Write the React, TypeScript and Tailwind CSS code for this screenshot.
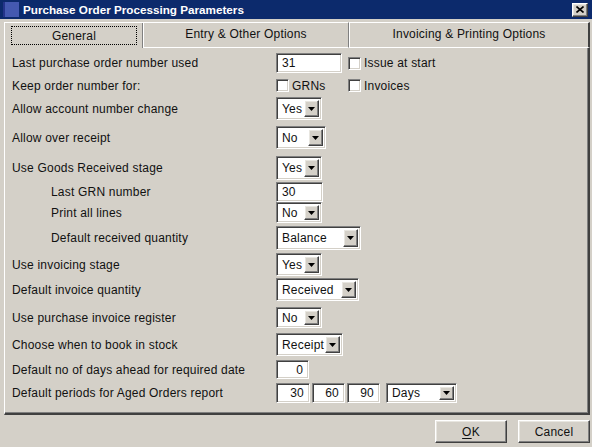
import type { ReactNode } from "react";

const raised =
  "border border-t-white border-l-white border-b-[#404040] border-r-[#404040] shadow-[inset_-1px_-1px_0_#808080,inset_1px_1px_0_#e8e6e0]";
const sunken =
  "border border-t-[#808080] border-l-[#808080] border-b-white border-r-white shadow-[inset_1px_1px_0_#404040,inset_-1px_-1px_0_#d4d0c8]";

const Field = ({ value, className, right }: { value: string; className: string; right?: boolean }) => (
  <div
    className={`${sunken} ${className} flex items-center bg-white ${right ? "justify-end pr-[5px]" : "pl-[5px]"}`}
  >
    {value}
  </div>
);

const Combo = ({ value, className }: { value: string; className: string }) => (
  <div className={`${sunken} ${className} flex items-stretch bg-white p-[2px]`}>
    <span className="flex flex-1 items-center pl-[3px]">{value}</span>
    <span className={`${raised} flex w-[15px] items-center justify-center bg-[#d4d0c8]`}>
      <svg width="7" height="4" viewBox="0 0 7 4">
        <path d="M0 0h7L3.5 4z" fill="#000" />
      </svg>
    </span>
  </div>
);

const Check = ({ label }: { label: string }) => (
  <div className="flex items-center gap-[3px]">
    <span className={`${sunken} h-[13px] w-[13px] bg-white`} />
    <span>{label}</span>
  </div>
);

const Row = ({
  label,
  indent,
  className,
  children,
}: {
  label: string;
  indent?: boolean;
  className: string;
  children: ReactNode;
}) => (
  <div className={`flex items-center ${className}`}>
    <div className={`w-[271px] shrink-0 ${indent ? "pl-[46px]" : "pl-[7px]"}`}>{label}</div>
    <div className="flex h-full items-center">{children}</div>
  </div>
);

export default function App() {
  return (
    <div
      className="flex h-[447px] w-[592px] flex-col overflow-hidden bg-[#d4d0c8] text-[12px] leading-none tracking-[0.2px] text-[#111]"
      style={{ fontFamily: '"Liberation Sans", Arial, sans-serif' }}
    >
      {/* title bar */}
      <div className="flex h-[19px] shrink-0 items-center bg-[#0c2a6c] pl-[3px] pr-[4px]">
        <div className="h-[15px] w-[16px] border-l-2 border-[#24348a] bg-[#4459b0]" />
        <div className="ml-[4px] flex-1 text-[11.7px] font-bold tracking-normal text-white">
          Purchase Order Processing Parameters
        </div>
        <div className={`${raised} flex h-[14px] w-[16px] items-center justify-center bg-[#d4d0c8]`}>
          <svg width="8" height="7" viewBox="0 0 8 7">
            <path d="M0.5 0.5l7 6M7.5 0.5l-7 6" stroke="#000" strokeWidth="1.6" />
          </svg>
        </div>
      </div>

      <div className="flex flex-1 flex-col pl-[4px] pr-[2px]">
        {/* tabs */}
        <div className="mt-[3px] flex h-[26px] shrink-0">
          <div className="flex w-[139px] items-center justify-center border-l border-t border-white px-[6px] pb-[2px] pt-[2px] shadow-[inset_-1px_0_0_#808080]">
            <div className="flex h-[19px] w-full items-center justify-center border border-dotted border-black">
              General
            </div>
          </div>
          <div className="flex w-[206px] items-center justify-center border-b border-l border-t border-white border-r-[#808080] border-r pb-[2px]">
            Entry &amp; Other Options
          </div>
          <div className="flex w-[241px] items-center justify-center border-b border-l border-t border-white border-r-[#404040] border-r-2 pb-[2px]">
            Invoicing &amp; Printing Options
          </div>
        </div>

        {/* panel */}
        <div className="flex h-[367px] shrink-0 flex-col border-b-2 border-l border-r-2 border-white border-b-[#404040] border-r-[#404040] shadow-[inset_-1px_-1px_0_#808080]">
          <Row label="Last purchase order number used" className="mt-[5px] h-[20px]">
            <Field value="31" className="h-[20px] w-[66px]" />
            <div className="ml-[6px]">
              <Check label="Issue at start" />
            </div>
          </Row>
          <Row label="Keep order number for:" className="mt-[6px] h-[13px]">
            <div className="w-[72px]">
              <Check label="GRNs" />
            </div>
            <Check label="Invoices" />
          </Row>
          <Row label="Allow account number change" className="mt-[5px] h-[23px]">
            <Combo value="Yes" className="h-[23px] w-[46px]" />
          </Row>
          <Row label="Allow over receipt" className="mt-[6px] h-[23px]">
            <Combo value="No" className="h-[23px] w-[50px]" />
          </Row>
          <Row label="Use Goods Received stage" className="mt-[7px] h-[24px]">
            <Combo value="Yes" className="h-[24px] w-[46px]" />
          </Row>
          <Row label="Last GRN number" indent className="mt-[2px] h-[20px]">
            <Field value="30" className="h-[20px] w-[47px]" />
          </Row>
          <Row label="Print all lines" indent className="h-[21px]">
            <Combo value="No" className="h-[21px] w-[46px]" />
          </Row>
          <Row label="Default received quantity" indent className="mt-[3px] h-[24px]">
            <Combo value="Balance" className="h-[24px] w-[85px]" />
          </Row>
          <Row label="Use invoicing stage" className="mt-[3px] h-[23px]">
            <Combo value="Yes" className="h-[23px] w-[46px]" />
          </Row>
          <Row label="Default invoice quantity" className="mt-[2px] h-[23px]">
            <Combo value="Received" className="h-[23px] w-[83px]" />
          </Row>
          <Row label="Use purchase invoice register" className="mt-[6px] h-[21px]">
            <Combo value="No" className="h-[21px] w-[46px]" />
          </Row>
          <Row label="Choose when to book in stock" className="mt-[5px] h-[23px]">
            <Combo value="Receipt" className="h-[23px] w-[67px]" />
          </Row>
          <Row label="Default no of days ahead for required date" className="mt-[4px] h-[19px]">
            <Field value="0" right className="h-[19px] w-[33px]" />
          </Row>
          <Row label="Default periods for Aged Orders report" className="mt-[4px] h-[20px]">
            <div className="flex gap-[2px]">
              <Field value="30" right className="h-[20px] w-[34px]" />
              <Field value="60" right className="h-[20px] w-[33px]" />
              <Field value="90" right className="h-[20px] w-[33px]" />
            </div>
            <Combo value="Days" className="ml-[6px] h-[20px] w-[71px]" />
          </Row>
        </div>

        {/* buttons */}
        <div className="mt-[5px] flex justify-end gap-[11px]">
          <button className={`${raised} h-[23px] w-[72px] bg-[#d4d0c8]`}>
            <span className="underline underline-offset-2">O</span>K
          </button>
          <button className={`${raised} h-[23px] w-[72px] bg-[#d4d0c8]`}>Cancel</button>
        </div>
      </div>
    </div>
  );
}
